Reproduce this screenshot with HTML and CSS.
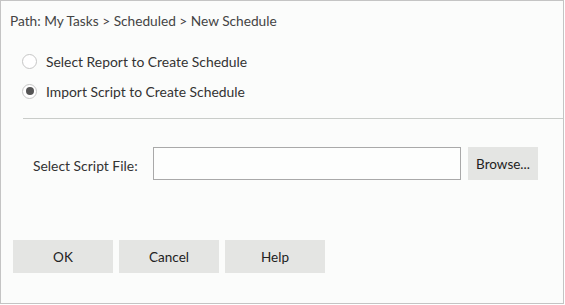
FILE: index.html
```html
<!DOCTYPE html>
<html lang="en">
<head>
  <meta charset="UTF-8" />
  <title>New Schedule</title>
  <link rel="stylesheet" href="styles.css">
</head>
<body>
  <div class="dialog">
    <div class="path">Path: My Tasks &gt; Scheduled &gt; New Schedule</div>

    <div class="options">
      <label class="option">
        <input type="radio" name="mode" value="report" />
        <span>Select Report to Create Schedule</span>
      </label>
      <label class="option">
        <input type="radio" name="mode" value="script" checked />
        <span>Import Script to Create Schedule</span>
      </label>
    </div>

    <div class="separator"></div>

    <div class="file-row">
      <label for="script-file" class="file-label">Select Script File:</label>
      <input type="text" id="script-file" class="file-input" />
      <button class="btn btn-browse">Browse...</button>
    </div>

    <div class="actions">
      <button class="btn">OK</button>
      <button class="btn">Cancel</button>
      <button class="btn">Help</button>
    </div>
  </div>
</body>
</html>
```

FILE: styles.css
```css
* {
  box-sizing: border-box;
}

body {
  margin: 0;
  font-family: Lato, 'Noto Sans', sans-serif;
  font-size: 13px;
  color: #333;
  background-color: #fff;
}

.dialog {
  width: 564px;
  height: 304px;
  border: 1px solid #c4c4c4;
  background-color: #fbfcfb;
  padding-top: 12px;
}

.path {
  padding-left: 9px;
  line-height: 16px;
  font-size: 13.7px;
  color: #444;
}

.options {
  margin-top: 17px;
  padding-left: 21px;
}

.option {
  display: flex;
  align-items: center;
  height: 30px;
  font-size: 13.9px;
  cursor: pointer;
}

.option input {
  appearance: none;
  -webkit-appearance: none;
  margin: 0 9px 0 0;
  width: 15px;
  height: 15px;
  border: 1px solid #c6c6c6;
  border-radius: 50%;
  background: #fff;
  display: flex;
  align-items: center;
  justify-content: center;
}

.option input:checked::after {
  content: "";
  width: 8px;
  height: 8px;
  border-radius: 50%;
  background: #555;
}

.separator {
  margin-top: 12px;
  margin-left: 22px;
  border-top: 1px solid #c9ccc9;
}

.file-row {
  display: flex;
  align-items: center;
  margin-top: 28px;
  padding-left: 32px;
  height: 33px;
}

.file-label {
  width: 120px;
  padding-top: 4px;
  font-size: 13.9px;
}

.file-input {
  width: 308px;
  height: 33px;
  border: 1px solid #a9a9a9;
  background: #fdfefd;
  font-family: inherit;
  font-size: 13px;
  padding: 0 6px;
  outline: none;
}

.btn {
  height: 33px;
  width: 100px;
  border: none;
  background-color: #e4e5e3;
  font-family: inherit;
  font-size: 13.5px;
  color: #222;
  cursor: pointer;
  padding: 0;
}

.btn:hover {
  background-color: #d8d9d7;
}

.btn-browse {
  width: 70px;
  margin-left: 7px;
}

.actions {
  display: flex;
  gap: 6px;
  margin-top: 60px;
  padding-left: 12px;
}
```
